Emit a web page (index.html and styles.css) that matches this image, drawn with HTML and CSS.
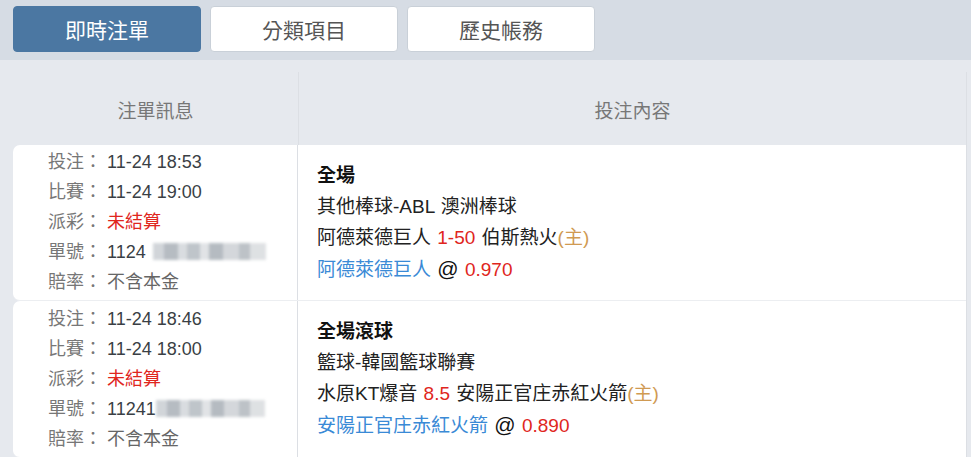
FILE: index.html
```html
<!DOCTYPE html>
<html lang="zh-Hant">
<head>
  <meta charset="UTF-8">
  <meta name="viewport" content="width=device-width, initial-scale=1.0">
  <title>即時注單</title>
  <link rel="stylesheet" href="styles.css">
</head>
<body>

  <div class="tabBar">
    <a class="tab on">即時注單</a>
    <a class="tab">分類項目</a>
    <a class="tab">歷史帳務</a>
  </div>

  <div class="betTable">
    <div class="head">
      <div class="colInfo">注單訊息</div>
      <div class="colContent">投注內容</div>
    </div>

    <div class="row">
      <div class="colInfo">
        <p><span class="label">投注：</span><span class="val">11-24 18:53</span></p>
        <p><span class="label">比賽：</span><span class="val">11-24 19:00</span></p>
        <p><span class="label">派彩：</span><span class="red">未結算</span></p>
        <p><span class="label">單號：</span><span class="val">1124</span><span class="mask"></span></p>
        <p><span class="label">賠率：</span><span class="muted">不含本金</span></p>
      </div>
      <div class="colContent">
        <p class="title">全場</p>
        <p>其他棒球-ABL 澳洲棒球</p>
        <p>阿德萊德巨人 <span class="red">1-50</span> 伯斯熱火<span class="home">(主)</span></p>
        <p><span class="blue">阿德萊德巨人</span> <span class="at">@</span> <span class="red">0.970</span></p>
      </div>
    </div>

    <div class="row">
      <div class="colInfo">
        <p><span class="label">投注：</span><span class="val">11-24 18:46</span></p>
        <p><span class="label">比賽：</span><span class="val">11-24 18:00</span></p>
        <p><span class="label">派彩：</span><span class="red">未結算</span></p>
        <p><span class="label">單號：</span><span class="val">11241</span><span class="mask short"></span></p>
        <p><span class="label">賠率：</span><span class="muted">不含本金</span></p>
      </div>
      <div class="colContent">
        <p class="title">全場滾球</p>
        <p>籃球-韓國籃球聯賽</p>
        <p>水原KT爆音 <span class="red">8.5</span> 安陽正官庄赤紅火箭<span class="home">(主)</span></p>
        <p><span class="blue">安陽正官庄赤紅火箭</span> <span class="at">@</span> <span class="red">0.890</span></p>
      </div>
    </div>
  </div>

</body>
</html>
```

FILE: styles.css
```css
body {
  margin: 0;
  background: #e6e9ee;
  font-family: "Liberation Sans", "Noto Sans CJK TC", sans-serif;
  font-size: 18px;
  color: #222;
  overflow: hidden;
}
p {
  margin: 0;
}

/* 상단 탭 */
.tabBar {
  height: 60px;
  box-sizing: border-box;
  padding: 6px 13px 0;
  background: #d6dce4;
  display: flex;
  gap: 9px;
}
.tab {
  height: 46px;
  box-sizing: border-box;
  width: 188px;
  border: 1px solid #c9d0d8;
  border-radius: 4px;
  background: #fff;
  color: #555;
  font-size: 21px;
  display: flex;
  align-items: center;
  justify-content: center;
}
.tab.on {
  background: #4b77a2;
  border-color: #4b77a2;
  color: #fff;
}

/* 테이블 */
.betTable {
  margin: 12px 4px 0 13px;
  border-right: 1px solid #dcdfe4;
}
.head, .row {
  display: flex;
}
.head {
  height: 73px;
  color: #777;
  font-size: 19px;
}
.head .colInfo, .head .colContent {
  display: flex;
  align-items: center;
  justify-content: center;
  padding-top: 2px;
}
.colInfo {
  width: 285px;
  flex: none;
  border-right: 1px solid #dcdfe4;
}
.colContent {
  flex: 1;
}
.row {
  background: #fff;
  border-radius: 7px 0 0 7px;
  border-bottom: 1px solid #eceef1;
}
.row .colInfo {
  padding: 2px 0 3px 35px;
  box-sizing: border-box;
  line-height: 30px;
}
.row + .row .colInfo {
  padding-top: 3px;
}
.row .colContent {
  padding: 15px 0 0 19px;
  line-height: 31px;
  font-size: 19px;
  word-spacing: 1px;
}
.label {
  display: inline-block;
  width: 59px;
  color: #777;
}
.val {
  color: #3a3f45;
}
.muted {
  color: #666;
}
.mask {
  display: inline-block;
  vertical-align: -2px;
  width: 113px;
  height: 17px;
  margin-left: 7px;
  background:
    linear-gradient(90deg, #c9ced3 0 10%, #aab1b8 10% 22%, #d3d7db 22% 30%, #b4bbc1 30% 42%, #dcdfe2 42% 50%, #a9b0b7 50% 62%, #cdd1d5 62% 76%, #b2b8be 76% 86%, #d9dcdf 86% 100%);
  filter: blur(1.5px);
  opacity: 0.85;
}
.mask.short {
  margin-left: 0;
  width: 109px;
}
.at {
  font-size: 21px;
  color: #111;
}
.title {
  font-weight: bold;
  color: #111;
}
.red {
  color: #e0261d;
}
.blue {
  color: #3a8ad6;
}
.home {
  color: #d09a52;
}
```
